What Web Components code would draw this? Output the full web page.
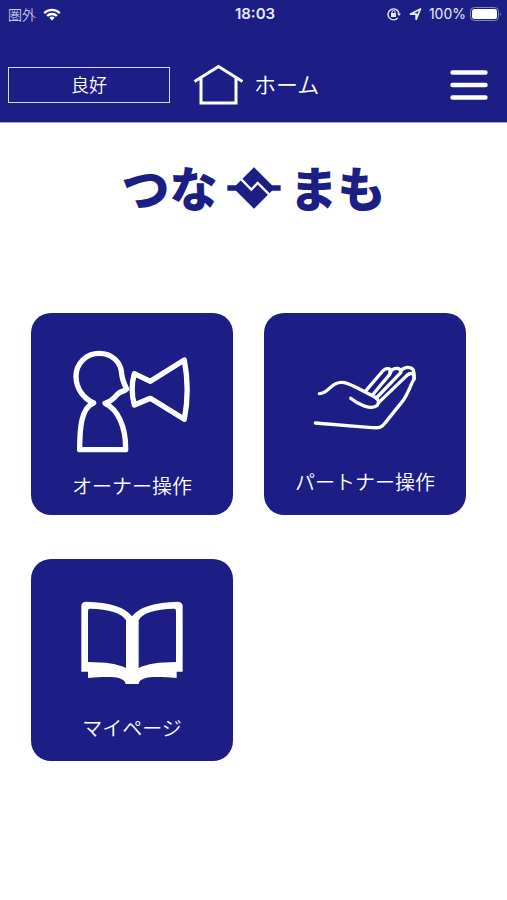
<!DOCTYPE html>
<html lang="ja">
<head>
<meta charset="utf-8">
<meta name="viewport" content="width=device-width, initial-scale=1">
<title>つなまも ホーム</title>
<style>
  body {
    margin: 0;
    background: #fff;
    --navy: #1c1e86;
    font-family: "Noto Sans CJK JP", "Noto Sans", sans-serif;
  }
</style>
</head>
<body>
<home-screen></home-screen>
<script>
function define(name, markup) {
  const template = document.createElement('template');
  template.innerHTML = markup;
  customElements.define(name, class extends HTMLElement {
    constructor() {
      super();
      this.attachShadow({ mode: 'open' }).append(template.content.cloneNode(true));
    }
  });
}

define('status-bar', `
<style>
  :host { display: grid; grid-template-columns: 1fr auto 1fr; align-items: center; height: 28px; padding: 0 5px 0 8px; color: #e9eafa; font-size: 14px; line-height: 20px; }
  svg { display: block; flex: none; }
  .side { display: flex; align-items: center; gap: 7px; }
  .carrier { font-weight: 300; }
  .right { justify-content: flex-end; }
  .time, .level { font-family: Inter, "Noto Sans", sans-serif; }
  .time { font-size: 15px; font-weight: 600; }
  .level { font-size: 14px; }
  .indicators { display: flex; gap: 8px; }
  .power { display: flex; align-items: center; gap: 4px; }
</style>
<div class="side"><span class="carrier">圏外</span>
  <svg width="18" height="13" viewBox="0 0 18 13" fill="none" stroke="#fff" stroke-width="2.4" aria-label="Wi-Fi"><path d="M1.2 5.1a11 11 0 0 1 15.6 0M4.1 8a7 7 0 0 1 9.8 0"/><path d="M9 12.6 6.3 9.8a3.8 3.8 0 0 1 5.4 0z" fill="#fff" stroke="none"/></svg>
</div>
<span class="time">18:03</span>
<div class="side right">
  <div class="indicators">
    <svg width="14" height="14" viewBox="0 0 14 14" fill="none" stroke="#e9eafa" stroke-width="1.4"><path d="M10.8 10.9A5.5 5.5 0 1 1 12 6.6"/><path d="m10 6.5 2 2.4 2-2.4z" fill="#e9eafa" stroke="none"/><path d="M5 6V5a1.5 1.5 0 0 1 3 0v1" stroke-width="1"/><path d="M4 6h5v4H4z" fill="#e9eafa" stroke="none"/></svg>
    <svg width="13" height="14" viewBox="0 0 13 14"><path d="M1.6 7 11.4 2 7.2 12.2V7.2z" fill="none" stroke="#e9eafa" stroke-width="1.8" stroke-linejoin="round"/></svg>
  </div>
  <div class="power"><span class="level">100%</span>
    <svg width="32" height="14" viewBox="0 0 32 14"><rect x=".5" y=".5" width="28" height="13" rx="4" fill="none" stroke="#8587c4"/><rect x="2" y="2" width="25" height="10" rx="2.5" fill="#fff"/><path d="M30 5q1.8 2 0 4z" fill="#8587c4"/></svg>
  </div>
</div>`);

define('nav-bar', `
<style>
  :host { display: flex; align-items: center; height: 36px; padding: 39px 19px 19px 8px; color: #fff; }
  .state { flex: 0 1 162px; box-sizing: border-box; height: 36px; border: 1px solid #d8d9f6; font-size: 18px; line-height: 32px; text-align: center; font-weight: 350; }
  .title { display: flex; align-items: center; gap: 10px; margin: 0 auto 0 23px; }
  h1 { margin: 0; padding-bottom: 4px; font-size: 22px; line-height: 32px; font-weight: 350; }
  svg { display: block; }
  button { padding: 0; border: 0; background: none; cursor: pointer; }
</style>
<div class="state" role="status">良好</div>
<div class="title">
  <svg width="51" height="42" viewBox="0 0 51 42" fill="none" stroke="#fff" stroke-width="3" aria-hidden="true"><path d="M1.5 17.5 25.5 2.5 49.5 17.5M8 14v25h35V14"/></svg>
  <h1><slot></slot></h1>
</div>
<button type="button" aria-label="メニュー"><svg width="38" height="30" viewBox="0 0 38 30" stroke="#fff" stroke-width="4.4" stroke-linecap="round"><path d="M2.5 2.5h33M2.5 15h33M2.5 27.5h33"/></svg></button>`);

define('app-header', `
<style>
  :host { display: block; background: var(--navy); border-bottom: 1px solid #a9aad8; }
</style>
<slot></slot>`);

define('brand-logo', `
<style>
  :host { display: flex; align-items: center; justify-content: center; gap: 9px; color: var(--navy); font-size: 48px; line-height: 60px; font-weight: 900; }
  span { padding-bottom: 4px; }
  svg { display: block; flex: none; }
</style>
<span>つな</span>
<svg width="54" height="42" viewBox="19 35 162 126" fill="var(--navy)" aria-hidden="true">
  <path d="M20 90H46L100 36 154 90H180V106H154L100 160 46 106H20Z"/>
  <path d="M53 63 92 103 111 83 149 121" fill="none" stroke="#fff" stroke-width="7"/>
</svg>
<span>まも</span>`);

define('menu-tile', `
<style>
  :host { display: block; }
  button { display: flex; flex-direction: column; width: 100%; aspect-ratio: 1; padding: 0; border: 0; border-radius: 20px; background: var(--navy); color: #fff; font: 350 20px/34px "Noto Sans CJK JP", "Noto Sans", sans-serif; text-align: center; cursor: pointer; }
  .label { display: block; width: 100%; }
  ::slotted(svg) { display: block; width: 100%; }
</style>
<button type="button"><slot name="icon"></slot><span class="label"><slot></slot></span></button>`);

define('home-screen', `
<style>
  :host { display: block; }
  main { padding: 33px 41px 40px 31px; }
  brand-logo { padding-left: 10px; margin-bottom: 93px; }
  nav { display: grid; grid-template-columns: 1fr 1fr; gap: 44px 31px; }
</style>
<app-header><status-bar></status-bar><nav-bar>ホーム</nav-bar></app-header>
<main>
  <brand-logo></brand-logo>
  <nav>
    <menu-tile>
      <svg slot="icon" viewBox="33 39 606 468" fill="none" stroke="#fff" stroke-width="16" stroke-linejoin="round" stroke-linecap="round" aria-hidden="true">
        <path d="M255 310C292 327 318 378 317 449H179C179 387 183 323 221 309 188 294 169 264 168 231 167 190 199 160 238 160 275 160 303 186 305 221 307 242 315 256 320 267 313 275 303 273 294 281 282 296 270 306 255 310Z"/>
        <path d="M343 221 391 244 493 180Q510 270 493 358L391 295 343 315Q330 266 343 221Z"/>
      </svg>オーナー操作
    </menu-tile>
    <menu-tile>
      <svg slot="icon" viewBox="27 39 606 456" fill="none" stroke="#fff" stroke-width="10" stroke-linejoin="round" stroke-linecap="round" aria-hidden="true">
        <path d="M193 281C223 280 226 247 259 247 279 247 295 258 313 267L358 290C371 297 374 307 367 316 350 332 308 313 287 295"/>
        <path d="M181 369 340 382C375 385 380 384 391 368L444 302C460 280 466 256 477 237 481 217 463 216 452 230L374 305"/>
        <path d="M331 274 378 219C397 195 416 209 404 223L355 282M404 216C420 199 438 204 438 217L364 294M437 212C454 196 477 201 477 219V238"/>
      </svg>パートナー操作
    </menu-tile>
    <menu-tile>
      <svg slot="icon" viewBox="33 30 606 456" fill="#fff" aria-hidden="true">
        <path fill-rule="evenodd" d="M184 368V170Q185 158 199 158 306 161 336 202 366 161 474 158 487 159 488 170V368H470V387C400 382 360 382 356 405H317C312 382 274 382 204 387V368ZM204 339Q282 339 318 357V214C305 192 267 180 210 179Q204 179 204 186ZM356 357Q392 339 468 339V186Q468 179 462 179C405 180 367 192 356 214Z"/>
      </svg>マイページ
    </menu-tile>
  </nav>
</main>`);
</script>
</body>
</html>
